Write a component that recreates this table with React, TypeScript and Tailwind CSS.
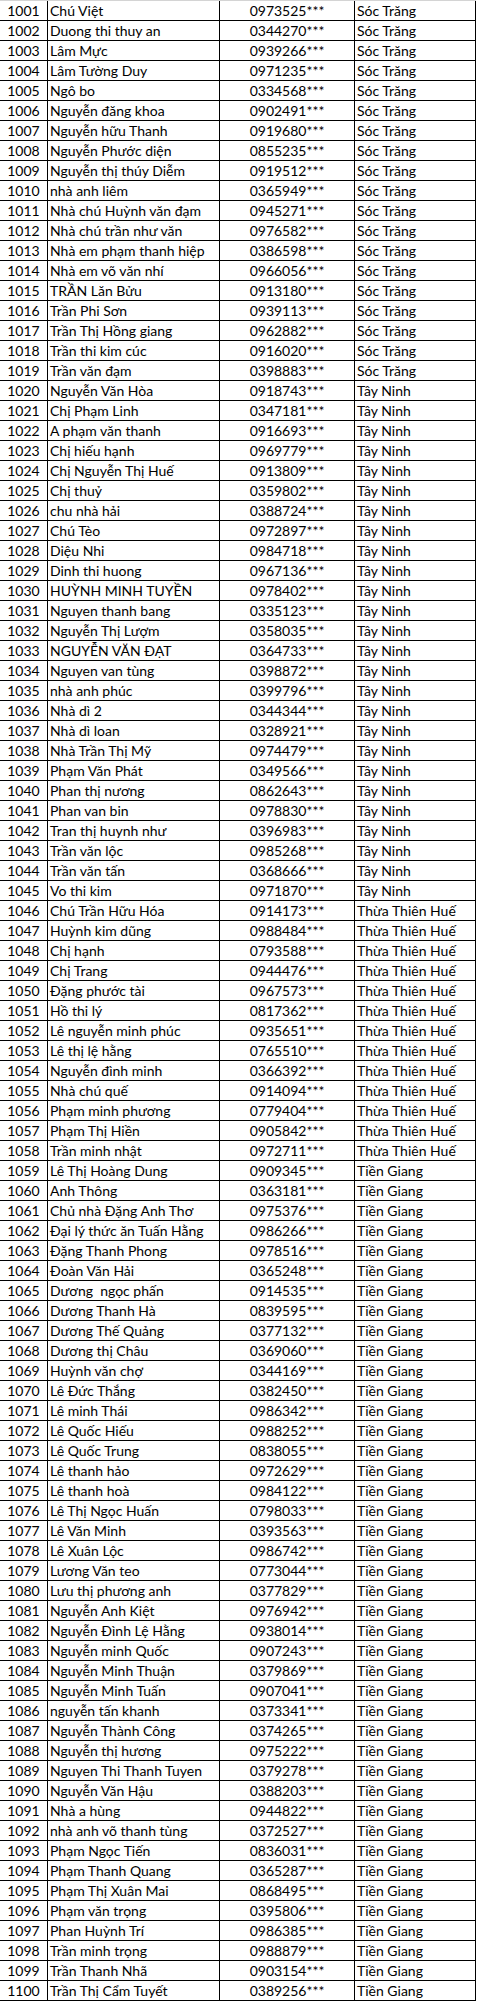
const rows: string[] = [
  "Chú Việt|0973525",
  "Duong thi thuy an|0344270",
  "Lâm Mực|0939266",
  "Lâm Tường Duy|0971235",
  "Ngô bo|0334568",
  "Nguyễn đăng khoa|0902491",
  "Nguyễn hữu Thanh|0919680",
  "Nguyễn Phước diện|0855235",
  "Nguyễn thị thúy Diễm|0919512",
  "nhà anh liêm|0365949",
  "Nhà chú Huỳnh văn đạm|0945271",
  "Nhà chú trần như văn|0976582",
  "Nhà em phạm thanh hiệp|0386598",
  "Nhà em võ văn nhí|0966056",
  "TRẦN Lăn Bửu|0913180",
  "Trần Phi Sơn|0939113",
  "Trần Thị Hồng giang|0962882",
  "Trần thi kim cúc|0916020",
  "Trần văn đạm|0398883",
  "Nguyễn Văn Hòa|0918743",
  "Chị Phạm Linh|0347181",
  "A phạm văn thanh|0916693",
  "Chị hiếu hạnh|0969779",
  "Chị Nguyễn Thị Huế|0913809",
  "Chị thuỷ|0359802",
  "chu nhà hải|0388724",
  "Chú Tèo|0972897",
  "Diệu Nhi|0984718",
  "Dinh thi huong|0967136",
  "HUỲNH MINH TUYỀN|0978402",
  "Nguyen thanh bang|0335123",
  "Nguyễn Thị Lượm|0358035",
  "NGUYỄN VĂN ĐẠT|0364733",
  "Nguyen van tùng|0398872",
  "nhà anh phúc|0399796",
  "Nhà dì 2|0344344",
  "Nhà dì loan|0328921",
  "Nhà Trần Thị Mỹ|0974479",
  "Phạm Văn Phát|0349566",
  "Phan thị nương|0862643",
  "Phan van bin|0978830",
  "Tran thị huynh như|0396983",
  "Trần văn lộc|0985268",
  "Trần văn tấn|0368666",
  "Vo thi kim|0971870",
  "Chú Trần Hữu Hóa|0914173",
  "Huỳnh kim dũng|0988484",
  "Chị hạnh|0793588",
  "Chị Trang|0944476",
  "Đặng phước tài|0967573",
  "Hồ thi lý|0817362",
  "Lê nguyễn minh phúc|0935651",
  "Lê thị lệ hằng|0765510",
  "Nguyễn đình minh|0366392",
  "Nhà chú quế|0914094",
  "Phạm minh phương|0779404",
  "Phạm Thị Hiền|0905842",
  "Trần minh nhật|0972711",
  "Lê Thị Hoàng Dung|0909345",
  "Anh Thông|0363181",
  "Chủ nhà Đặng Anh Thơ|0975376",
  "Đại lý thức ăn Tuấn Hằng|0986266",
  "Đặng Thanh Phong|0978516",
  "Đoàn Văn Hải|0365248",
  "Dương  ngọc phấn|0914535",
  "Dương Thanh Hà|0839595",
  "Dương Thế Quảng|0377132",
  "Dương thị Châu|0369060",
  "Huỳnh văn chợ|0344169",
  "Lê Đức Thắng|0382450",
  "Lê minh Thái|0986342",
  "Lê Quốc Hiếu|0988252",
  "Lê Quốc Trung|0838055",
  "Lê thanh hảo|0972629",
  "Lê thanh hoà|0984122",
  "Lê Thị Ngọc Huấn|0798033",
  "Lê Văn Minh|0393563",
  "Lê Xuân Lộc|0986742",
  "Lương Văn teo|0773044",
  "Lưu thị phương anh|0377829",
  "Nguyễn Anh Kiệt|0976942",
  "Nguyễn Đình Lệ Hằng|0938014",
  "Nguyễn minh Quốc|0907243",
  "Nguyễn Minh Thuận|0379869",
  "Nguyễn Minh Tuấn|0907041",
  "nguyễn tấn khanh|0373341",
  "Nguyễn Thành Công|0374265",
  "Nguyễn thị hương|0975222",
  "Nguyen Thi Thanh Tuyen|0379278",
  "Nguyễn Văn Hậu|0388203",
  "Nhà a hùng|0944822",
  "nhà anh võ thanh tùng|0372527",
  "Phạm Ngọc Tiến|0836031",
  "Phạm Thanh Quang|0365287",
  "Phạm Thị Xuân Mai|0868495",
  "Phạm văn trọng|0395806",
  "Phan Huỳnh Trí|0986385",
  "Trần minh trọng|0988879",
  "Trần Thanh Nhã|0903154",
  "Trần Thị Cẩm Tuyết|0389256",
];

// tỉnh theo khoảng số thứ tự
function province(i: number): string {
  if (i < 19) return "Sóc Trăng";
  if (i < 45) return "Tây Ninh";
  if (i < 58) return "Thừa Thiên Huế";
  return "Tiền Giang";
}

export default function App() {
  return (
    <div className="w-[477px] bg-white font-['Lato',sans-serif] text-[14px] leading-[19px] text-black">
      <div className="w-[476px] border-t border-[#d4d4d4]">
        {rows.map((r, i) => {
          const [name, phone] = r.split("|");
          return (
            <div
              key={i}
              className="grid h-[20px] grid-cols-[47px_172px_135px_122px] border-b border-black"
            >
              <div className="text-center">{1001 + i}</div>
              <div className="overflow-hidden whitespace-pre border-l border-black pl-[2px]">
                {name}
              </div>
              <div className="border-l border-black text-center">{phone}***</div>
              <div className="border-x border-black pl-[2px]">{province(i)}</div>
            </div>
          );
        })}
      </div>
    </div>
  );
}
